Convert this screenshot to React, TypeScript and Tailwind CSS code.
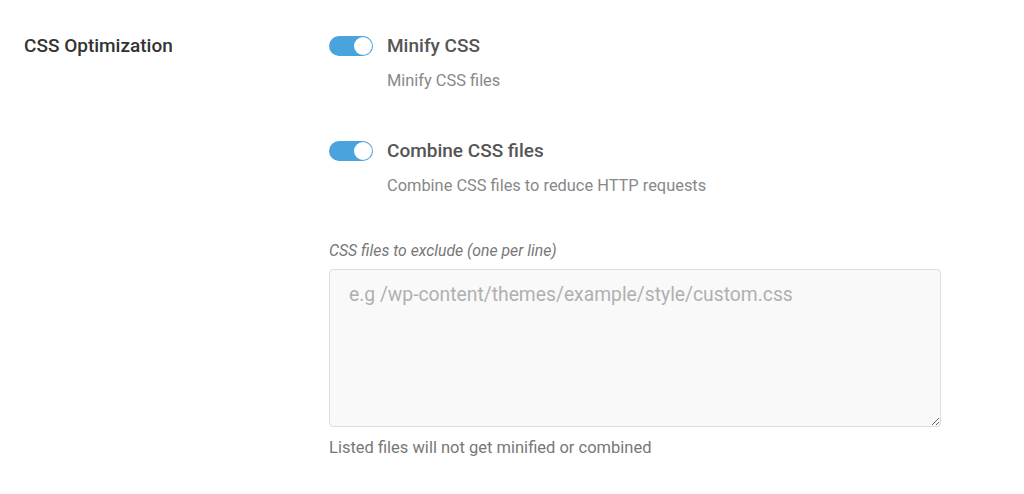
import React from 'react'

function Toggle({ on = true }: { on?: boolean }) {
  return (
    <span
      className={
        'relative inline-flex h-[20px] w-[44px] shrink-0 items-center rounded-full ' +
        (on ? 'bg-[#4ba3de]' : 'bg-[#ccc]')
      }
    >
      <span className="absolute right-[1px] h-[18px] w-[18px] rounded-full bg-white" />
    </span>
  )
}

function Option({ title, desc }: { title: string; desc: string }) {
  return (
    <div className="flex flex-col">
      <div className="flex h-[20px] items-center gap-[14px]">
        <Toggle />
        <span className="text-[19px] font-medium text-[#555]">{title}</span>
      </div>
      <p className="mt-[15px] pl-[58px] text-[16.4px] leading-[20px] text-[#888]">{desc}</p>
    </div>
  )
}

export default function App() {
  return (
    <div className="min-h-[494px] bg-white font-['Roboto',sans-serif]">
      <div className="flex pt-[36px]">
        <div className="w-[329px] shrink-0 pl-[24px]">
          <h3 className="h-[20px] text-[19px] font-medium leading-[20px] text-[#333]">
            CSS Optimization
          </h3>
        </div>
        <div className="flex w-[612px] flex-col">
          <Option title="Minify CSS" desc="Minify CSS files" />
          <div className="mt-[50px]">
            <Option title="Combine CSS files" desc="Combine CSS files to reduce HTTP requests" />
          </div>
          <label className="mt-[45px] text-[15.8px] italic leading-[20px] text-[#777]">
            CSS files to exclude (one per line)
          </label>
          <textarea
            className="mt-[8px] h-[158px] w-full rounded-[4px] border border-[#ddd] bg-[#f9f9f9] px-[19px] py-[12px] text-[19.3px] leading-[26px] text-[#555] outline-none placeholder:text-[#b0b0b0]"
            placeholder="e.g /wp-content/themes/example/style/custom.css"
          />
          <p className="mt-[10px] text-[16.5px] leading-[22px] text-[#777]">
            Listed files will not get minified or combined
          </p>
        </div>
      </div>
    </div>
  )
}
